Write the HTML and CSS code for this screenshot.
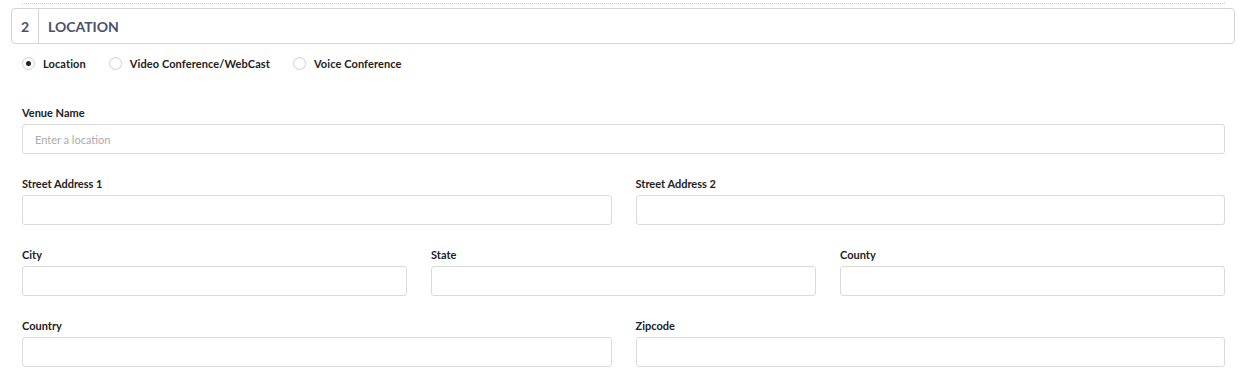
FILE: index.html
```html
<!DOCTYPE html>
<html lang="en">
<head>
  <meta charset="UTF-8" />
  <meta name="viewport" content="width=device-width, initial-scale=1.0" />
  <title>Location</title>
  <link rel="stylesheet" href="styles.css">
</head>
<body>
  <div class="divider"></div>

  <div class="section-head">
    <span class="step">2</span>
    <span class="title">LOCATION</span>
  </div>

  <div class="form">
    <div class="radios">
      <label class="radio"><input type="radio" name="kind" checked> <span>Location</span></label>
      <label class="radio"><input type="radio" name="kind"> <span>Video Conference/WebCast</span></label>
      <label class="radio"><input type="radio" name="kind"> <span>Voice Conference</span></label>
    </div>

    <div class="row">
      <div class="field">
        <label for="venue">Venue Name</label>
        <input type="text" id="venue" placeholder="Enter a location" />
      </div>
    </div>

    <div class="row cols-2">
      <div class="field">
        <label for="street1">Street Address 1</label>
        <input type="text" id="street1" />
      </div>
      <div class="field">
        <label for="street2">Street Address 2</label>
        <input type="text" id="street2" />
      </div>
    </div>

    <div class="row cols-3">
      <div class="field">
        <label for="city">City</label>
        <input type="text" id="city" />
      </div>
      <div class="field">
        <label for="state">State</label>
        <input type="text" id="state" />
      </div>
      <div class="field">
        <label for="county">County</label>
        <input type="text" id="county" />
      </div>
    </div>

    <div class="row cols-2">
      <div class="field">
        <label for="country">Country</label>
        <input type="text" id="country" />
      </div>
      <div class="field">
        <label for="zip">Zipcode</label>
        <input type="text" id="zip" />
      </div>
    </div>
  </div>
</body>
</html>
```

FILE: styles.css
```css
body {
  margin: 0;
  padding-top: 3px;
  font-family: Lato, "Open Sans", sans-serif;
  background: #fff;
  color: #222;
}

.divider {
  margin: 0 21px 0 22px;
  border-top: 1px dotted #c4c4c4;
}

.section-head {
  display: flex;
  align-items: stretch;
  height: 34px;
  margin: 4px 11px 0 11px;
  border: 1px solid #d4d4d4;
  border-radius: 4px;
  color: #4b5068;
}

.step {
  width: 26px;
  border-right: 1px solid #d4d4d4;
  display: flex;
  align-items: center;
  justify-content: center;
  font-size: 14px;
  font-weight: 700;
}

.title {
  display: flex;
  align-items: center;
  padding-left: 9px;
  font-size: 14px;
  font-weight: 700;
}

.form {
  padding: 0 21px 0 22px;
}

.radios {
  display: flex;
  align-items: center;
  height: 20px;
  margin-top: 9px;
}

.radio {
  display: flex;
  align-items: center;
  font-size: 11px;
  font-weight: 700;
  letter-spacing: 0.1px;
  margin-right: 23px;
}

.radio input {
  appearance: none;
  width: 13px;
  height: 13px;
  margin: 0 8px 0 0;
  border: 1px solid #d0d0d0;
  border-radius: 50%;
  background: #fff;
  position: relative;
}

.radio input:checked::after {
  content: "";
  position: absolute;
  left: 3px;
  top: 3px;
  width: 5px;
  height: 5px;
  border-radius: 50%;
  background: #222;
}

.row {
  display: grid;
  grid-template-columns: 1fr;
  column-gap: 24px;
  margin-top: 23px;
}

.radios + .row {
  margin-top: 33px;
}

.cols-2 {
  grid-template-columns: 1fr 1fr;
}

.cols-3 {
  grid-template-columns: 1fr 1fr 1fr;
}

.field label {
  display: block;
  font-size: 11px;
  font-weight: 700;
  line-height: 14px;
  margin-bottom: 4px;
}

.field input {
  display: block;
  width: 100%;
  box-sizing: border-box;
  height: 30px;
  padding: 0 12px;
  border: 1px solid #dadada;
  border-radius: 3px;
  font-family: inherit;
  font-size: 11px;
  color: #333;
}

.field input::placeholder {
  color: #ababab;
}
```
